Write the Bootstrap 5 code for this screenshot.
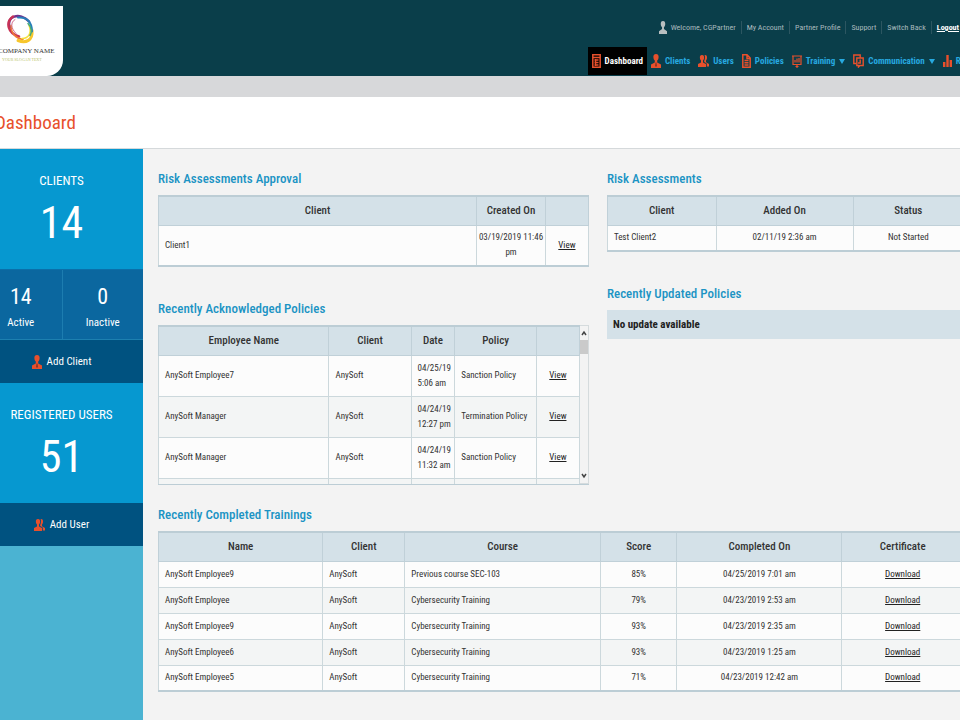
<!DOCTYPE html>
<html lang="en">
<head>
<meta charset="utf-8">
<meta name="viewport" content="width=device-width, initial-scale=1">
<title>Dashboard</title>
<link href="https://cdn.jsdelivr.net/npm/bootstrap@5.3.0/dist/css/bootstrap.min.css" rel="stylesheet">
<style>
body{font-family:"Roboto Condensed",Roboto,"Liberation Sans",sans-serif;font-size:9px;line-height:15px;color:#333;background:#f3f3f3;overflow-x:hidden}
svg{flex:none}
.shell{margin:0 -28px 0 -20px;min-height:100vh}
.topbar{background:#0a3e4a;height:76px;padding-top:6px}
.brand{background:#fff;width:83px;height:70px;border-bottom-right-radius:16px;padding:6px 0 0 18px;color:#333;font:7px/12px "Liberation Serif",serif}
.tagline{font-size:4px;line-height:6px;color:#b9c46a}
.account{font-size:8px;color:#a9b9bd;line-height:13px;padding-right:29px;margin-top:15px}
.account a,.account span{color:inherit;padding:0 5px;border-left:1px solid #2c5661}
.account span{border:0}
.account a.logout{color:#fff;font-weight:700;padding-right:0}
.mainnav{margin-top:13px}
.mainnav .nav-link{height:28px;padding:0 4px;gap:4px;font-size:9px;font-weight:700;color:#27a9e0;display:flex;align-items:center}
.mainnav .nav-link.active{background:#000;color:#fff}
.mainnav .dropdown-toggle::after{margin-left:0;vertical-align:0;border-width:5px 3px 0}
.ic{fill:#e8502c;stroke:none}
.ln{fill:none;stroke:#e8502c;stroke-width:1.5}
.strip{background:#d7d8da;height:21px}
.pagehead{background:#fff;height:52px;border-bottom:1px solid #d5d9db;padding:13px 0 0 15px}
.pagehead h1{font-size:19px;line-height:26px;font-weight:400;color:#e8502c;margin:0}
.side{width:163px;flex:none;background:#4bb3d2;color:#fff}
.tile{background:#0698d0;height:120px;padding-top:22px}
.tile h2{font-size:13px;line-height:20px;margin:0;font-weight:400}
.tile .big{font-size:44px;line-height:64px}
.halves{background:#0b679f;height:71px;border-top:1px solid #0a6fa9;border-bottom:1px solid #1d80b0}
.halves>div{padding-top:14px;font-size:11px}
.halves>div+div{border-left:1px solid #1d7db0}
.halves b{font-weight:400;font-size:22px;line-height:26px;display:block}
.halves span{display:block;line-height:26px}
.add{background:#005280;color:#fff;height:43px;font-size:11px;text-decoration:none;gap:5px}
.content{padding:20px 24px 0 15px;min-width:0;flex:1}
.content h2{font-size:13px;line-height:20px;color:#1b93c4;margin:0 0 6px;font-weight:500}
.cols{display:grid;grid-template-columns:432fr 358fr;gap:18px}
.grid-table{width:100%;table-layout:fixed;border-collapse:collapse;background:#fcfcfc;border:1px solid #bccdd5;border-top-width:2px;border-bottom-width:2px}
.grid-table th{background:#d4e1e8;font-size:11px;font-weight:500;height:29px;text-align:center;border:1px solid #c0d0d8;padding:0}
.grid-table td{border:1px solid #ccd8dc;padding:3px 6px;height:26px}
.grid-table tr:nth-child(even) td{background:#f3f5f5}
.grid-table td.c{text-align:center}
.grid-table a{color:#222}
.grid-table.tall td{height:41px}
.grid-table td.when{padding-right:0}
.scroller{height:160px;overflow:hidden;border-bottom:1px solid #bccdd5}
.bar{width:10px;background:#f3f3f3;border:1px solid #d5dbdd;border-left:0}
.thumb{width:8px;height:14px;background:#cacaca}
.notice{background:#d4e1e8;height:29px;line-height:29px;padding-left:6px;font-size:11px;font-weight:700;color:#222}
</style>
</head>
<body>
<svg class="d-none" xmlns="http://www.w3.org/2000/svg">
<symbol id="person" viewBox="0 0 10 14"><path d="M5 0c2 0 3 1.300 2.800 3.500C7.700 5 7 6 6.200 6.700V8.500L10 11V14H0v-3l3.800-2.500V6.700C3 6 2.300 5 2.200 3.500 2 1.300 3 0 5 0z"/></symbol>
<symbol id="client" viewBox="0 0 10 14"><path d="M5 0c2 0 2.800 1.300 2.600 3.200C7.500 5 6.800 6 6.200 6.400V8.500L10 10.500V14H0v-3.500L3.800 8.500V6.400C3.200 6 2.500 5 2.400 3.200 2.200 1.300 3 0 5 0z"/><path d="M4.500 8.500h1L6 12l-1 1-1-1z" fill="#8f3422"/></symbol>
<symbol id="users" viewBox="0 0 11 12"><path d="M4 0c1.600 0 2.300 1.200 2.100 2.900C6 4.200 5.500 5 5 5.400V7.400l3 1.600V12H0V9l3-1.600v-2C2.500 5 2 4.200 1.900 2.900 1.700 1.200 2.400 0 4 0zM7 0c1.600 0 2.200 1.200 2 2.900-.1 1.300-.6 2.100-1 2.500v1.900L11 9v2.500H8.800V8.600L6.200 7V5.700C7 4.500 7.300 2 6.600.1z"/></symbol>
</svg>
<div class="shell d-flex flex-column">
<header class="topbar d-flex justify-content-between">
  <div class="brand">
    <svg width="30" height="33" viewBox="0 0 30 32" class="d-block ms-2" fill="none" stroke-linecap="round">
      <path d="M4 15C-1 4 14-1 23 9" stroke="#70328d" stroke-width="2.500"/>
      <path d="M7 4C-1 10 2 21 13 24" stroke="#c83255" stroke-width="2.500"/>
      <path d="M5 13c0 8 5 13 12 14" stroke="#ee7a36" stroke-width="1.500"/>
      <path d="M12 28c8 3 15 0 14-10" stroke="#f7c62c" stroke-width="3"/>
      <path d="M16 26c7 0 10-6 7-13" stroke="#f4e03b" stroke-width="1.500"/>
      <path d="M12 5c9-1 14 5 14 14" stroke="#287fb9" stroke-width="2"/>
      <path d="M9 7c-5 3-4 9 1 14" stroke="#d06a8a" stroke-width="1"/>
      <path d="M22 11c4 4 4 9 2 12" stroke="#43aa78" stroke-width="1.500"/>
    </svg>
    <div class="text-nowrap">COMPANY NAME</div>
    <div class="tagline ps-1 text-nowrap">YOUR SLOGAN TEXT</div>
  </div>
  <div class="d-flex flex-column">
    <div class="account d-flex align-items-center justify-content-end">
      <svg width="8" height="13" viewBox="0 0 10 14" preserveAspectRatio="none" fill="#b8bfc0"><use href="#person" width="10" height="14"/></svg><span class="ps-1">Welcome, CGPartner</span>
      <a class="text-decoration-none" href="#">My Account</a><a class="text-decoration-none" href="#">Partner Profile</a><a class="text-decoration-none" href="#">Support</a><a class="text-decoration-none" href="#">Switch Back</a><a class="logout" href="#">Logout</a>
    </div>
    <nav class="mainnav nav flex-nowrap">
      <a class="nav-link active" href="#"><svg width="9" height="14" viewBox="0 0 9 14" class="ln"><path d="M.8.800h7.400v12.400H.8zM1 3.500h7M2.500 6h4M2.500 8.500h4M2.500 11h4M3.500 5v7"/></svg>Dashboard</a>
      <a class="nav-link" href="#"><svg width="10" height="14" class="ic"><use href="#client"/></svg>Clients</a>
      <a class="nav-link" href="#"><svg width="11" height="12" class="ic"><use href="#users"/></svg>Users</a>
      <a class="nav-link" href="#"><svg width="9" height="14" viewBox="0 0 9 14" class="ln"><path d="M.8.800H5L8.200 4v9.200H.8zM5 1v3.500h3M2.500 6.500h4M2.500 8.700h4M2.500 11h4"/></svg>Policies</a>
      <a class="nav-link dropdown-toggle" href="#"><svg width="10" height="13" viewBox="0 0 10 13" class="ln"><path d="M0 1h10M1 1v8.500h8V1M5 9.500V13M3.500 11.500h3M3 7.500V5M5 7.500V3.500M7 7.500V3" stroke-width="1.200"/></svg>Training</a>
      <a class="nav-link dropdown-toggle" href="#"><svg width="11" height="14" viewBox="0 0 11 14" class="ln"><path d="M3 9.500H.8V1h6.400v2.500M3.800 4h6.400v7.500H7L5.500 13v-1.500H3.800zM5 9h2.200V5.500" stroke-width="1.400"/></svg>Communication</a>
      <a class="nav-link" href="#"><svg width="9" height="12" viewBox="0 0 9 12" class="ic"><path d="M0 7h2.400v5H0zM3.300 0h2.400v12H3.300zM6.600 5H9v7H6.600z"/></svg>Reports</a>
    </nav>
  </div>
</header>
<div class="strip"></div>
<div class="pagehead"><h1>Dashboard</h1></div>
<div class="d-flex flex-grow-1">
<aside class="side text-center">
  <div class="tile"><h2>CLIENTS</h2><div class="big">14</div></div>
  <div class="halves d-flex"><div class="w-50"><b>14</b><span>Active</span></div><div class="w-50"><b>0</b><span>Inactive</span></div></div>
  <a class="add d-flex align-items-center justify-content-center" href="#"><svg width="10" height="14" class="ic"><use href="#client"/></svg>Add Client</a>
  <div class="tile"><h2>REGISTERED USERS</h2><div class="big">51</div></div>
  <a class="add d-flex align-items-center justify-content-center" href="#"><svg width="11" height="12" class="ic"><use href="#users"/></svg>Add User</a>
</aside>
<main class="content">
  <div class="cols">
    <div>
      <section>
        <h2>Risk Assessments Approval</h2>
        <table class="grid-table tall"><colgroup><col style="width:74%"><col style="width:16%"><col style="width:10%"></colgroup>
        <thead><tr><th>Client</th><th>Created On</th><th></th></tr></thead>
        <tbody><tr><td>Client1</td><td class="c px-0">03/19/2019 11:46 pm</td><td class="c"><a href="#">View</a></td></tr></tbody></table>
      </section>
      <section class="mt-4 pt-2">
        <h2>Recently Acknowledged Policies</h2>
        <div class="scroller d-flex">
          <div class="flex-grow-1">
          <table class="grid-table tall"><colgroup><col style="width:40.500%"><col style="width:19.500%"><col style="width:10.400%"><col style="width:19.400%"><col></colgroup>
          <thead><tr><th>Employee Name</th><th>Client</th><th>Date</th><th>Policy</th><th></th></tr></thead>
          <tbody>
          <tr><td>AnySoft Employee7</td><td>AnySoft</td><td class="when">04/25/19 5:06 am</td><td>Sanction Policy</td><td class="c"><a href="#">View</a></td></tr>
          <tr><td>AnySoft Manager</td><td>AnySoft</td><td class="when">04/24/19 12:27 pm</td><td>Termination Policy</td><td class="c"><a href="#">View</a></td></tr>
          <tr><td>AnySoft Manager</td><td>AnySoft</td><td class="when">04/24/19 11:32 am</td><td>Sanction Policy</td><td class="c"><a href="#">View</a></td></tr>
          <tr><td></td><td></td><td></td><td></td><td></td></tr>
          </tbody></table>
          </div>
          <div class="bar d-flex flex-column justify-content-between align-items-center">
            <div><svg class="d-block" width="8" height="14" viewBox="0 0 8 14" fill="none" stroke="#444" stroke-width="1.500"><path d="M2 9l2-3 2 3"/></svg><div class="thumb"></div></div>
            <svg width="8" height="14" viewBox="0 0 8 14" fill="none" stroke="#444" stroke-width="1.500"><path d="M2 5l2 3 2-3"/></svg>
          </div>
        </div>
      </section>
    </div>
    <div>
      <section>
        <h2>Risk Assessments</h2>
        <table class="grid-table"><colgroup><col style="width:30.500%"><col style="width:38.500%"><col></colgroup>
        <thead><tr><th>Client</th><th>Added On</th><th>Status</th></tr></thead>
        <tbody><tr><td>Test Client2</td><td class="c">02/11/19 2:36 am</td><td class="c">Not Started</td></tr></tbody></table>
      </section>
      <section class="mt-4 pt-2">
        <h2>Recently Updated Policies</h2>
        <div class="notice">No update available</div>
      </section>
    </div>
  </div>
  <section class="mt-3 pt-1">
    <h2>Recently Completed Trainings</h2>
    <table class="grid-table"><colgroup><col style="width:20.400%"><col style="width:10.200%"><col style="width:24.300%"><col style="width:9.500%"><col style="width:20.500%"><col></colgroup>
    <thead><tr><th>Name</th><th>Client</th><th>Course</th><th>Score</th><th>Completed On</th><th>Certificate</th></tr></thead>
    <tbody>
    <tr><td>AnySoft Employee9</td><td>AnySoft</td><td>Previous course SEC-103</td><td class="c">85%</td><td class="c">04/25/2019 7:01 am</td><td class="c"><a href="#">Download</a></td></tr>
    <tr><td>AnySoft Employee</td><td>AnySoft</td><td>Cybersecurity Training</td><td class="c">79%</td><td class="c">04/23/2019 2:53 am</td><td class="c"><a href="#">Download</a></td></tr>
    <tr><td>AnySoft Employee9</td><td>AnySoft</td><td>Cybersecurity Training</td><td class="c">93%</td><td class="c">04/23/2019 2:35 am</td><td class="c"><a href="#">Download</a></td></tr>
    <tr><td>AnySoft Employee6</td><td>AnySoft</td><td>Cybersecurity Training</td><td class="c">93%</td><td class="c">04/23/2019 1:25 am</td><td class="c"><a href="#">Download</a></td></tr>
    <tr><td>AnySoft Employee5</td><td>AnySoft</td><td>Cybersecurity Training</td><td class="c">71%</td><td class="c">04/23/2019 12:42 am</td><td class="c"><a href="#">Download</a></td></tr>
    </tbody></table>
  </section>
</main>
</div>
</div>
<script src="https://cdn.jsdelivr.net/npm/bootstrap@5.3.0/dist/js/bootstrap.bundle.min.js"></script>
</body>
</html>
